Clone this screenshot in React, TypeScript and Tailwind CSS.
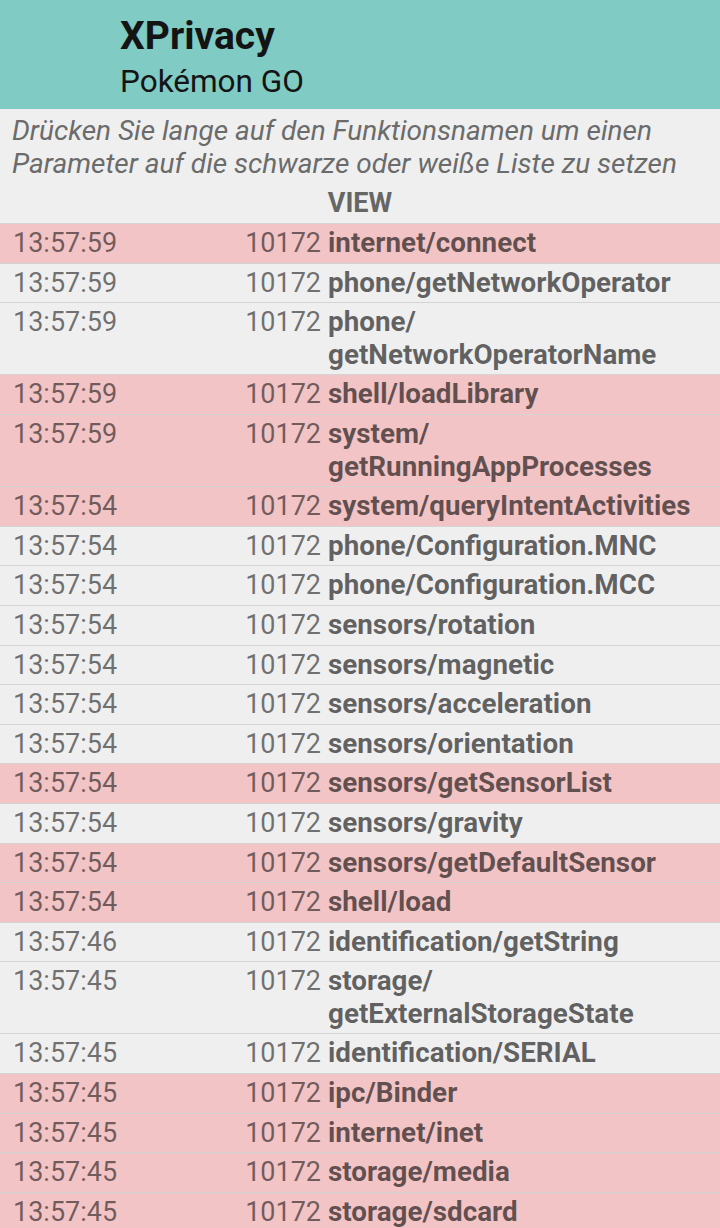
import React from "react";

type Row = { t: string; f: string[]; pink?: boolean };

const rows: Row[] = [
  { t: "13:57:59", f: ["internet/connect"], pink: true },
  { t: "13:57:59", f: ["phone/getNetworkOperator"] },
  { t: "13:57:59", f: ["phone/", "getNetworkOperatorName"] },
  { t: "13:57:59", f: ["shell/loadLibrary"], pink: true },
  { t: "13:57:59", f: ["system/", "getRunningAppProcesses"], pink: true },
  { t: "13:57:54", f: ["system/queryIntentActivities"], pink: true },
  { t: "13:57:54", f: ["phone/Configuration.MNC"] },
  { t: "13:57:54", f: ["phone/Configuration.MCC"] },
  { t: "13:57:54", f: ["sensors/rotation"] },
  { t: "13:57:54", f: ["sensors/magnetic"] },
  { t: "13:57:54", f: ["sensors/acceleration"] },
  { t: "13:57:54", f: ["sensors/orientation"] },
  { t: "13:57:54", f: ["sensors/getSensorList"], pink: true },
  { t: "13:57:54", f: ["sensors/gravity"] },
  { t: "13:57:54", f: ["sensors/getDefaultSensor"], pink: true },
  { t: "13:57:54", f: ["shell/load"], pink: true },
  { t: "13:57:46", f: ["identification/getString"] },
  { t: "13:57:45", f: ["storage/", "getExternalStorageState"] },
  { t: "13:57:45", f: ["identification/SERIAL"] },
  { t: "13:57:45", f: ["ipc/Binder"], pink: true },
  { t: "13:57:45", f: ["internet/inet"], pink: true },
  { t: "13:57:45", f: ["storage/media"], pink: true },
  { t: "13:57:45", f: ["storage/sdcard"], pink: true },
];

export default function App() {
  return (
    <div
      className="w-[720px] h-[1228px] overflow-hidden bg-[#efefef]"
      style={{ fontFamily: "Roboto, 'Liberation Sans', sans-serif" }}
    >
      <div className="h-[109px] bg-[#80cbc4] pl-[120px] pt-[10px] flex flex-col">
        <div className="text-[39px] leading-[52px] font-bold text-[#141414]">XPrivacy</div>
        <div className="text-[31.5px] leading-[40px] text-[#141414]">Pokémon GO</div>
      </div>
      <div className="px-[12px] pt-[5px] italic text-[28px] leading-[33px] text-[#6b6b6b]">
        <div>Drücken Sie lange auf den Funktionsnamen um einen</div>
        <div>Parameter auf die schwarze oder weiße Liste zu setzen</div>
      </div>
      <div className="h-[43px] flex items-center justify-center pt-[3px] text-[27px] font-bold text-[#666666]">
        VIEW
      </div>
      <div className="flex flex-col">
        {rows.map((r, i) => (
          <div
            key={i}
            className={
              "flex border-t border-[#d4d4d4] py-[3px] text-[27px] leading-[32.6px] text-black/55 " +
              (r.pink ? "bg-[#f2c4c5]" : "bg-[#efefef]")
            }
          >
            <div className="w-[245px] pl-[13px] shrink-0">{r.t}</div>
            <div className="w-[76px] text-right shrink-0">10172</div>
            <div className="pl-[7px] font-bold text-[27.8px] text-black/60">
              {r.f.map((l, j) => (
                <div key={j}>{l}</div>
              ))}
            </div>
          </div>
        ))}
      </div>
    </div>
  );
}
